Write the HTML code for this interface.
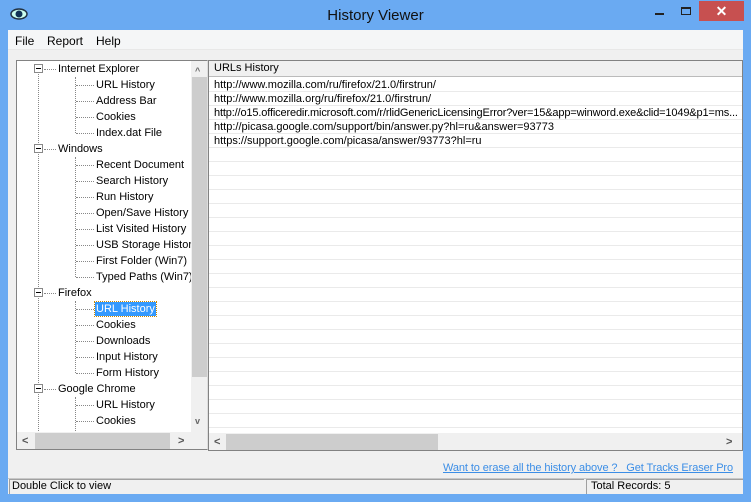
<!DOCTYPE html>
<html><head><style>
*{margin:0;padding:0;box-sizing:border-box}
body{width:751px;height:502px;background:#6aaaf2;font-family:"Liberation Sans",Arial,sans-serif;font-size:11px;color:#000;position:relative;overflow:hidden}
.a{position:absolute}
.t{position:absolute;white-space:nowrap;line-height:16px}
.dh{position:absolute;border-top:1px dotted #888;height:0}
.dv{position:absolute;border-left:1px dotted #888;width:0}
.pb{position:absolute;width:9px;height:9px;border:1px solid #888;background:#fff}
.pb:after{content:"";position:absolute;left:1px;top:3px;width:5px;height:1px;background:#000}
.row{position:absolute;left:0;right:0;height:14px;border-bottom:1px solid #eaeaea;line-height:14px;padding-left:5px;white-space:nowrap;overflow:hidden}
</style></head><body>
<div class="a" style="left:10px;top:7px;width:18px;height:14px"><svg width="18" height="14"><ellipse cx="9" cy="7" rx="8" ry="5" fill="#cfe" stroke="#234" stroke-width="1.5"/><circle cx="9" cy="7" r="3.5" fill="#135"/></svg></div>
<div class="t" style="left:0;width:751px;text-align:center;top:7px;font-size:15px;line-height:18px;color:#111">History Viewer</div>
<div class="a" style="left:655px;top:13px;width:9px;height:2px;background:#222"></div>
<div class="a" style="left:681px;top:7px;width:10px;height:8px;border:1px solid #222;border-top-width:2px"></div>
<div class="a" style="left:699px;top:1px;width:45px;height:20px;background:#c75050;color:#fff;text-align:center;font-size:14px;line-height:20px;font-weight:bold">✕</div>
<div class="a" style="left:8px;top:30px;width:735px;height:464px;background:#f0f0f0"></div>
<div class="a" style="left:8px;top:30px;width:735px;height:20px;background:#f5f6f7;border-bottom:1px solid #e8e8e8"></div>
<div class="t" style="left:15px;top:33px;font-size:12px">File</div>
<div class="t" style="left:47px;top:33px;font-size:12px">Report</div>
<div class="t" style="left:96px;top:33px;font-size:12px">Help</div>
<div class="a" style="left:16px;top:60px;width:192px;height:390px;border:1px solid #828282;border-right-color:#ddd;background:#fff;overflow:hidden">
<div class="a" style="left:174px;top:0;width:17px;height:371px;background:#f0f0f0"></div>
<div class="a" style="left:175px;top:16px;width:15px;height:300px;background:#cdcdcd"></div>
<div class="t" style="left:178px;top:2px;color:#666;font-size:9px;font-weight:bold">^</div>
<div class="t" style="left:178px;top:352px;color:#666;font-size:9px;font-weight:bold">v</div>
<div class="a" style="left:0;top:371px;width:191px;height:18px;background:#f0f0f0"></div>
<div class="a" style="left:18px;top:372px;width:135px;height:16px;background:#cdcdcd"></div>
<div class="t" style="left:5px;top:372px;color:#555;font-weight:bold">&lt;</div>
<div class="t" style="left:161px;top:372px;color:#555;font-weight:bold">&gt;</div>
</div>
<div class="a" style="left:17px;top:61px;width:174px;height:370px;overflow:hidden">
<div class="dv" style="left:21px;top:8px;height:370px"></div>
<div class="dv" style="left:58px;top:16px;height:56px"></div>
<div class="dv" style="left:58px;top:96px;height:120px"></div>
<div class="dv" style="left:58px;top:240px;height:72px"></div>
<div class="dv" style="left:58px;top:336px;height:40px"></div>
</div>
<div class="a" style="left:17px;top:61px;width:174px;height:370px;overflow:hidden" id="tr"></div>
<script>
var items=[[0,"Internet Explorer"],[1,"URL History"],[1,"Address Bar"],[1,"Cookies"],[1,"Index.dat File"],[0,"Windows"],[1,"Recent Document"],[1,"Search History"],[1,"Run History"],[1,"Open/Save History"],[1,"List Visited History"],[1,"USB Storage History"],[1,"First Folder (Win7)"],[1,"Typed Paths (Win7)"],[0,"Firefox"],[1,"URL History"],[1,"Cookies"],[1,"Downloads"],[1,"Input History"],[1,"Form History"],[0,"Google Chrome"],[1,"URL History"],[1,"Cookies"],[1,"Downloads"]];
var h="";items.forEach(function(it,i){var y=i*16;if(it[0]==0){h+='<div class="pb" style="left:17px;top:'+(y+3)+'px"></div><div class="dh" style="left:27px;width:12px;top:'+(y+8)+'px"></div><div class="t" style="left:41px;top:'+y+'px">'+it[1]+'</div>';}else{var sel=i==15;h+='<div class="dh" style="left:59px;width:18px;top:'+(y+8)+'px"></div><div class="t" style="left:78px;top:'+(y+1)+'px;line-height:14px;padding:0 1px;'+(sel?'background:#3399ff;color:#fff;outline:1px dotted #c80':'')+'">'+it[1]+'</div>';}});
document.getElementById('tr').innerHTML=h;
</script>
<div class="a" style="left:208px;top:60px;width:535px;height:391px;border:1px solid #828282;border-right:none;background:#fff;overflow:hidden">
<div class="a" style="left:0;top:0;width:534px;height:16px;background:#f0f0f0;border-bottom:1px solid #bbb;padding-left:5px;line-height:15px;font-size:11px">URLs History</div>
<div class="a" style="left:0;top:17px;width:534px;height:354px;overflow:hidden">
<div class="row" style="top:0">http://www.mozilla.com/ru/firefox/21.0/firstrun/</div>
<div class="row" style="top:14px">http://www.mozilla.org/ru/firefox/21.0/firstrun/</div>
<div class="row" style="top:28px;letter-spacing:-0.15px">http://o15.officeredir.microsoft.com/r/rlidGenericLicensingError?ver=15&amp;app=winword.exe&amp;clid=1049&amp;p1=ms...</div>
<div class="row" style="top:42px">http://picasa.google.com/support/bin/answer.py?hl=ru&amp;answer=93773</div>
<div class="row" style="top:56px">https://support.google.com/picasa/answer/93773?hl=ru</div>
<div class="row" style="top:70px"></div><div class="row" style="top:84px"></div><div class="row" style="top:98px"></div><div class="row" style="top:112px"></div><div class="row" style="top:126px"></div><div class="row" style="top:140px"></div><div class="row" style="top:154px"></div><div class="row" style="top:168px"></div><div class="row" style="top:182px"></div><div class="row" style="top:196px"></div><div class="row" style="top:210px"></div><div class="row" style="top:224px"></div><div class="row" style="top:238px"></div><div class="row" style="top:252px"></div><div class="row" style="top:266px"></div><div class="row" style="top:280px"></div><div class="row" style="top:294px"></div><div class="row" style="top:308px"></div><div class="row" style="top:322px"></div><div class="row" style="top:336px"></div>
</div>
<div class="a" style="left:0;top:372px;width:534px;height:18px;background:#f0f0f0"></div>
<div class="a" style="left:17px;top:373px;width:212px;height:16px;background:#cdcdcd"></div>
<div class="t" style="left:5px;top:373px;color:#555;font-weight:bold">&lt;</div>
<div class="t" style="left:517px;top:373px;color:#555;font-weight:bold">&gt;</div>
</div>
<div class="a" style="left:742px;top:60px;width:1px;height:391px;background:#828282"></div>
<div class="t" style="left:443px;top:460px;color:#3c8ee6;text-decoration:underline;font-size:11px;letter-spacing:-0.1px">Want to erase all the history above ?&nbsp;&nbsp; Get Tracks Eraser Pro</div>
<div class="a" style="left:8px;top:478px;width:735px;height:1px;background:#c8c8c8"></div>
<div class="a" style="left:9px;top:479px;width:575px;height:15px;border-left:1px solid #a0a0a0;border-top:1px solid #a0a0a0"></div>
<div class="t" style="left:12px;top:479px;line-height:15px;font-size:11px">Double Click to view</div>
<div class="a" style="left:586px;top:479px;width:157px;height:15px;border-left:1px solid #a0a0a0;border-top:1px solid #a0a0a0"></div>
<div class="t" style="left:591px;top:479px;line-height:15px;font-size:11px">Total Records: 5</div>
</body></html>
